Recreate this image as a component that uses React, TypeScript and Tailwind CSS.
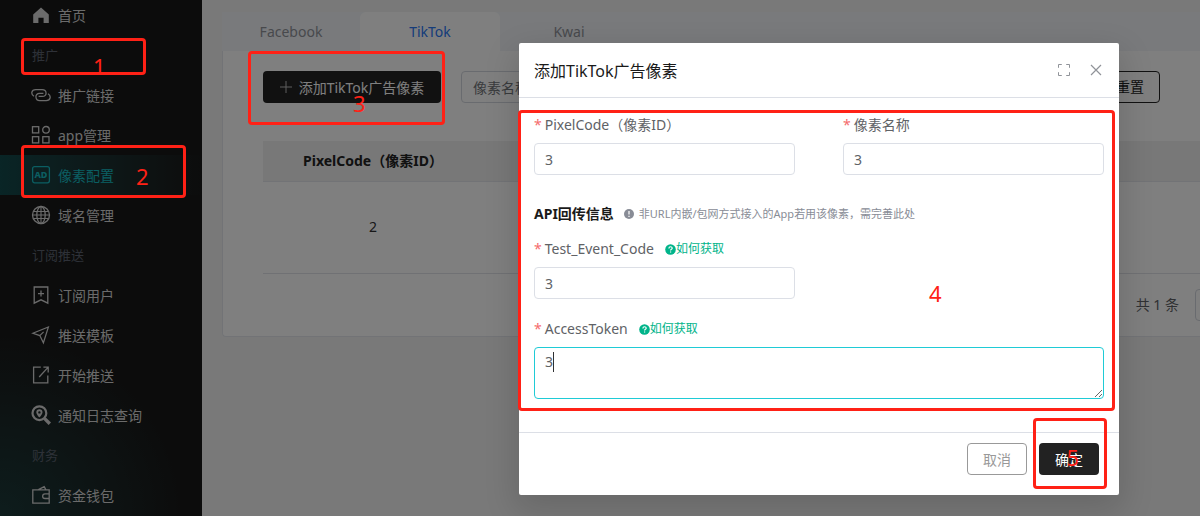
import React from "react";

type IconProps = { children: React.ReactNode };

function Icon({ children }: IconProps) {
  return (
    <svg
      viewBox="0 0 20 20"
      className="h-5 w-5 shrink-0"
      fill="none"
      stroke="currentColor"
      strokeWidth="1.3"
      aria-hidden="true"
    >
      {children}
    </svg>
  );
}

const icons = {
  home: (
    <path
      d="M10 2.6 17.8 9.4V18H12.6V12.800H7.4V18H2.2V9.4Z"
      fill="currentColor"
      stroke="none"
    />
  ),
  link: (
    <>
      <path d="M3 11.200C-.400 9.200.200 4.600 4.800 4.600h6.400c4.800 0 5.400 6.800.200 6.800H7.600" />
      <path d="M17 8.800c3.400 2 2.800 6.800-1.800 6.800H8.800C4 15.600 3.400 8.400 8.600 8.400h3.800" />
    </>
  ),
  apps: (
    <>
      <rect x="1.500" y="1.700" width="6.200" height="6.200" />
      <circle cx="15" cy="4.800" r="3.300" />
      <rect x="1.500" y="11.700" width="6.200" height="6.200" />
      <rect x="11.800" y="11.700" width="6.200" height="6.200" />
    </>
  ),
  ad: (
    <>
      <rect x="1.600" y="1.600" width="16.800" height="16.200" rx="2" />
      <text
        x="10"
        y="13"
        textAnchor="middle"
        fontSize="9"
        fontWeight="800"
        fill="currentColor"
        stroke="none"
      >
        AD
      </text>
    </>
  ),
  globe: (
    <>
      <circle cx="10" cy="10" r="8.500" />
      <ellipse cx="10" cy="10" rx="4.200" ry="8.500" />
      <path d="M10 1.500v17M2.600 6.500h14.800M1.500 10h17M2.600 13.500h14.800" strokeWidth="1.100" />
    </>
  ),
  bookmark: (
    <path d="M3.200 2h13.600v16.200L10 14.800l-6.800 3.400ZM10 5.600v6M7 8.600h6" strokeWidth="1.300" />
  ),
  send: <path d="M1.800 8.200 17.400 2 12.400 17.800 8.800 10.600ZM8.800 10.600 12.600 6.800" strokeWidth="1.200" />,
  open: (
    <path d="M9.800 2.200H2.600v15.600h14.200v-7.200M12.400 2.200h4.800v5.400M17 2.400 8.200 12" strokeWidth="1.300" />
  ),
  search: (
    <>
      <circle cx="8.400" cy="8.200" r="6.900" strokeWidth="2.200" />
      <path d="m13.400 13.400 5.400 5.400" strokeWidth="3.400" />
      <path
        d="M8.400 4.200a3.100 3.100 0 0 0-3.100 3.100c0 2.200 3.100 5.200 3.100 5.200s3.100-3 3.100-5.200a3.100 3.100 0 0 0-3.100-3.100Zm0 2a1.200 1.200 0 1 1 0 2.400 1.200 1.200 0 0 1 0-2.400Z"
        fill="currentColor"
        fillRule="evenodd"
        stroke="none"
      />
    </>
  ),
  wallet: (
    <path
      d="M1.800 4.800h16.400v13.400H1.800ZM7.400 4.600l5.800-3 1.600 3M18 8.800h-4a2.300 2.300 0 0 0 0 4.700h4"
      strokeWidth="1.300"
    />
  ),
};

type MenuItem = { label: string; icon?: keyof typeof icons; active?: boolean };

const menu: MenuItem[] = [
  { label: "首页", icon: "home" },
  { label: "推广" },
  { label: "推广链接", icon: "link" },
  { label: "app管理", icon: "apps" },
  { label: "像素配置", icon: "ad", active: true },
  { label: "域名管理", icon: "globe" },
  { label: "订阅推送" },
  { label: "订阅用户", icon: "bookmark" },
  { label: "推送模板", icon: "send" },
  { label: "开始推送", icon: "open" },
  { label: "通知日志查询", icon: "search" },
  { label: "财务" },
  { label: "资金钱包", icon: "wallet" },
];

function Sidebar() {
  return (
    <nav className="w-[202px] shrink-0 overflow-hidden bg-[#191919] bg-[radial-gradient(circle_at_0%_100%,#1c3a3a_0,#191919_180px)]">
      <ul className="-mt-[5px]">
        {menu.map((item) =>
          item.icon ? (
            <li key={item.label}>
              <a
                href="#"
                className={
                  item.active
                    ? "flex h-10 items-center gap-[7px] bg-linear-to-r from-[#124a4c] to-[#191919] pl-[31px] text-sm text-[#16bcc4]"
                    : "flex h-10 items-center gap-[7px] pl-[31px] text-sm text-[#d6d6d6]"
                }
              >
                <Icon>{icons[item.icon]}</Icon>
                <span className="pt-0.5">{item.label}</span>
              </a>
            </li>
          ) : (
            <li key={item.label} className="flex h-10 items-center pl-8 pt-px text-[13px] text-[#5c6370]">
              {item.label}
            </li>
          ),
        )}
      </ul>
    </nav>
  );
}

function Content() {
  return (
    <main className="min-w-0 flex-1 overflow-hidden bg-[#f3f3f3] pl-5 pt-3">
      <div role="tablist" className="flex h-[39px] bg-[#f2f5f9] text-sm text-[#909399]">
        <button role="tab" className="w-[138px]">
          Facebook
        </button>
        <button role="tab" aria-selected="true" className="w-[140px] rounded-t-md bg-white text-[#2b78f5]">
          TikTok
        </button>
        <button role="tab" className="w-[138px]">
          Kwai
        </button>
      </div>
      <section className="rounded-bl border-b border-l border-[#e4e7ed] bg-white pb-[15px] pl-10 pt-5">
        <div className="flex gap-5 pr-10">
          <button className="flex h-8 w-[178px] shrink-0 items-center justify-center gap-[7px] rounded bg-[#222] text-sm text-white">
            <svg viewBox="0 0 12 12" className="h-3 w-3" stroke="#bbb" strokeWidth="1" aria-hidden="true">
              <path d="M6 0v12M0 6h12" />
            </svg>
            <span className="pt-0.5">添加TikTok广告像素</span>
          </button>
          <input
            aria-label="像素名称"
            placeholder="像素名称"
            className="h-8 w-52 rounded border border-[#d3d6de] px-[11px] text-sm placeholder:text-[#73767a]"
          />
          <button className="ml-auto h-8 w-[60px] shrink-0 rounded border border-[#222] text-sm text-[#222]">
            重置
          </button>
        </div>
        <table className="mt-[38px] w-full table-fixed text-center text-sm text-[#303133]">
          <thead>
            <tr className="h-10 border-b border-[#e4e7ed] bg-[#f0f0f0]">
              <th className="w-[220px] font-bold text-[#222]">PixelCode（像素ID）</th>
              <th aria-label="像素名称" />
            </tr>
          </thead>
          <tbody>
            <tr className="h-[92px] border-b border-[#e0e2e8]">
              <td>2</td>
              <td />
            </tr>
          </tbody>
        </table>
        <div className="mt-[15px] flex items-center justify-end gap-4 text-sm text-[#606266]">
          <span>共 1 条</span>
          <select
            aria-label="每页条数"
            className="-mr-[123px] h-8 w-32 appearance-none rounded border border-[#d3d6de] px-3"
          />
        </div>
      </section>
    </main>
  );
}

const fieldClass =
  "h-8 w-full rounded border border-[#dcdfe6] px-[10px] text-sm text-[#606266] outline-none";

function FieldLabel({ htmlFor, children, help }: { htmlFor: string; children: string; help?: boolean }) {
  return (
    <div className="mb-2 flex h-5 items-center text-sm text-[#606266]">
      <label htmlFor={htmlFor}>
        <span className="mr-[3px] text-[#f56c6c]">*</span>
        {children}
      </label>
      {help && (
        <a href="#" className="ml-[11px] flex items-center text-xs text-[#00b48a]">
          <svg viewBox="0 0 11 11" className="h-[11px] w-[11px]" aria-hidden="true">
            <circle cx="5.500" cy="5.500" r="5.300" fill="currentColor" />
            <path
              d="M3.900 4.400c0-2.200 3.300-2.100 3.300-.2 0 1.100-1.600 1-1.600 2.200M5.600 7.400v1.200"
              fill="none"
              stroke="#fff"
              strokeWidth="1.200"
            />
          </svg>
          如何获取
        </a>
      )}
    </div>
  );
}

function Dialog() {
  return (
    <form
      role="dialog"
      aria-labelledby="dialog-title"
      className="relative w-[600px] rounded-xs bg-white shadow-[0_12px_32px_4px_rgba(0,0,0,0.14)]"
    >
      <header className="flex h-[55px] items-center border-b border-[#dcdfe6] pl-[15px] pr-4">
        <h2 id="dialog-title" className="flex-1 pt-0.5 text-base text-[#1a1a1a]">
          添加TikTok广告像素
        </h2>
        <button type="button" aria-label="全屏" className="mr-[18px] text-[#909399]">
          <svg viewBox="0 0 14 14" className="h-[14px] w-[14px]" fill="none" stroke="currentColor" aria-hidden="true">
            <path d="M1.500 4.800V1.500h3.300M9.200 1.500h3.300v3.300M12.500 9.200v3.300H9.200M4.800 12.500H1.500V9.200" />
          </svg>
        </button>
        <button type="button" aria-label="关闭" className="text-[#909399]">
          <svg viewBox="0 0 14 14" className="h-[14px] w-[14px]" fill="none" stroke="currentColor" strokeWidth="1.200" aria-hidden="true">
            <path d="m2 2 10 10M12 2 2 12" />
          </svg>
        </button>
      </header>

      <div className="grid grid-cols-2 gap-x-12 px-[15px] pb-[33px] pt-[17px]">
        <div>
          <FieldLabel htmlFor="pixel-code">PixelCode（像素ID）</FieldLabel>
          <input id="pixel-code" defaultValue="3" className={fieldClass} />
        </div>
        <div>
          <FieldLabel htmlFor="pixel-name">像素名称</FieldLabel>
          <input id="pixel-name" defaultValue="3" className={fieldClass} />
        </div>
        <div className="col-span-2 mb-[15px] mt-[29px] flex h-5 items-center text-[11px] text-[#888c96]">
          <h3 className="text-sm font-bold text-[#1a1a1a]">API回传信息</h3>
          <svg viewBox="0 0 10 10" className="ml-[10px] mr-[5px] h-[10px] w-[10px]" aria-hidden="true">
            <circle cx="5" cy="5" r="5" fill="currentColor" />
            <path d="M5 2v3.600M5 6.700v1.300" stroke="#fff" strokeWidth="1.200" />
          </svg>
          非URL内嵌/包网方式接入的App若用该像素，需完善此处
        </div>
        <div>
          <FieldLabel htmlFor="event-code" help>
            Test_Event_Code
          </FieldLabel>
          <input id="event-code" defaultValue="3" className={fieldClass} />
        </div>
        <div className="col-span-2 mt-5">
          <FieldLabel htmlFor="access-token" help>
            AccessToken
          </FieldLabel>
          <div className="relative">
            <textarea
              id="access-token"
              defaultValue="3"
              className="block h-[52px] w-full rounded border border-[#1fcbd6] px-[10px] py-1 text-sm text-[#606266] outline-none"
            />
            <span className="absolute left-[19px] top-[5px] h-5 w-px bg-[#303133]" />
          </div>
        </div>
      </div>

      <footer className="flex justify-end gap-3 border-t border-[#dcdfe6] pb-5 pl-5 pr-5 pt-[10px] text-sm">
        <button type="button" className="h-8 w-[60px] rounded border border-[#999] pt-0.5 text-[#999]">
          取消
        </button>
        <button type="submit" className="h-8 w-[60px] rounded bg-[#222] pt-0.5 text-white">
          确定
        </button>
      </footer>

      <div className="pointer-events-none absolute -left-px right-1 top-[67px] h-[301px] rounded border-3 border-[#ff2116]" />
      <span className="pointer-events-none absolute left-[410px] top-[234px] text-[22px] leading-8 text-[#ff2116]">
        4
      </span>
      <div className="pointer-events-none absolute right-3 top-[375px] h-[71px] w-[74px] rounded border-3 border-[#ff2116]" />
      <span className="pointer-events-none absolute right-10 top-[398px] text-[22px] leading-8 text-[#ff2116]">
        5
      </span>
    </form>
  );
}

function Steps() {
  return (
    <div className="pointer-events-none absolute inset-0 text-[22px] leading-8 text-[#ff2116]">
      <div className="absolute left-[21px] top-[38px] h-[37px] w-[125px] rounded border-3 border-[#ff2116]" />
      <span className="absolute left-[93px] top-[50px]">1</span>
      <div className="absolute left-[21px] top-[145px] h-[53px] w-[165px] rounded border-3 border-[#ff2116]" />
      <span className="absolute left-[136px] top-[160px]">2</span>
      <div className="absolute left-[248px] top-[51px] h-[74px] w-[197px] rounded border-3 border-[#ff2116]" />
      <span className="absolute left-[353px] top-[87px]">3</span>
    </div>
  );
}

export default function App() {
  return (
    <div className="relative flex min-h-screen overflow-hidden font-['Noto_Sans','Noto_Sans_CJK_SC',sans-serif]">
      <Sidebar />
      <Content />
      <div className="absolute inset-0 flex items-start justify-end overflow-hidden bg-black/50 pr-[81px] pt-[43px]">
        <Dialog />
      </div>
      <Steps />
    </div>
  );
}
